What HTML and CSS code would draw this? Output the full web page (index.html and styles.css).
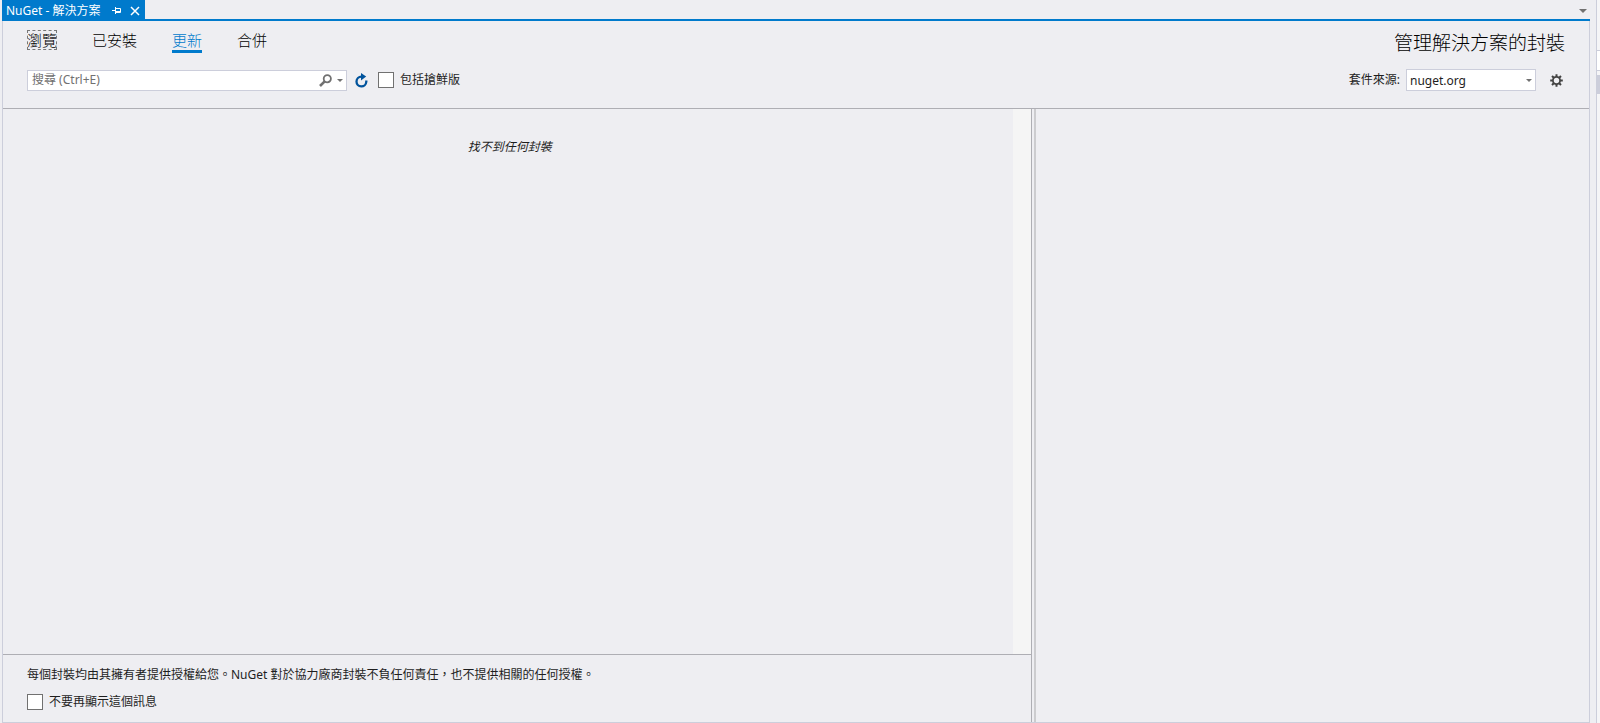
FILE: index.html
```html
<!DOCTYPE html>
<html lang="zh-Hant">
<head>
<meta charset="utf-8">
<title>NuGet - 解決方案</title>
<link rel="stylesheet" href="styles.css">
</head>
<body>
<div class="document">
  <div class="tabstrip">
    <div class="doc-tab">
      <span class="doc-name">NuGet - 解決方案</span>
      <button class="tab-button" aria-label="釘選">
        <svg width="9" height="9" viewBox="0 0 9 9"><path d="M0 4.5h3M3.5 1v7M4 2.5h4.5v4H4M4 5.5h4" fill="none" stroke="currentColor"/></svg>
      </button>
      <button class="tab-button" aria-label="關閉">
        <svg width="10" height="10" viewBox="0 0 10 10"><path d="M1 1l8 8M9 1l-8 8" fill="none" stroke="currentColor" stroke-width="1.5"/></svg>
      </button>
    </div>
    <button class="overflow-button" aria-label="文件清單">
      <svg width="8" height="4" viewBox="0 0 8 4"><path d="M0 0h8L4 4z" fill="currentColor"/></svg>
    </button>
  </div>
  <main class="manager">
    <header class="header">
      <div class="header-row">
        <nav class="filters">
          <a class="filter focused" href="#browse">瀏覽</a>
          <a class="filter" href="#installed">已安裝</a>
          <a class="filter active" href="#updates">更新</a>
          <a class="filter" href="#consolidate">合併</a>
        </nav>
        <h1 class="title">管理解決方案的封裝</h1>
      </div>
      <div class="header-row controls">
        <div class="tools">
          <div class="search">
            <input class="search-input" type="text" aria-label="搜尋" placeholder="搜尋 (Ctrl+E)">
            <button class="search-button" aria-label="搜尋">
              <svg width="13" height="13" viewBox="0 0 13 13"><circle cx="8.3" cy="4.7" r="3.6" fill="none" stroke="currentColor" stroke-width="1.8"/><path d="M5.7 7.3L1 12" stroke="currentColor" stroke-width="2.6"/></svg>
            </button>
            <button class="search-menu" aria-label="搜尋選項">
              <svg width="6" height="3" viewBox="0 0 6 3"><path d="M0 0h6L3 3z" fill="currentColor"/></svg>
            </button>
          </div>
          <button class="refresh" aria-label="重新整理">
            <svg width="13" height="15" viewBox="0 0 13 15"><path d="M7.5 3.6H6.4a4.9 4.9 0 1 0 4.9 5.2V7.5" fill="none" stroke="currentColor" stroke-width="2.3"/><path d="M6 0l5.2 3.6L6 7.5z" fill="currentColor"/></svg>
          </button>
          <label class="option"><input class="check" type="checkbox">包括搶鮮版</label>
        </div>
        <div class="source">
          <label for="source">套件來源:</label>
          <div class="combo">
            <select class="combo-select" id="source"><option>nuget.org</option></select>
            <svg class="combo-arrow" width="6" height="3" viewBox="0 0 6 3"><path d="M0 0h6L3 3z" fill="currentColor"/></svg>
          </div>
          <button class="settings" aria-label="設定">
            <svg width="13" height="13" viewBox="-6.5 -6.5 13 13"><circle r="3.6" fill="none" stroke="currentColor" stroke-width="1.8"/><path d="M0-6.3v2.5M0 6.3V3.8M-6.3 0h2.5M6.3 0H3.8M-4.5-4.5l1.8 1.8M4.5 4.5L2.7 2.7M-4.5 4.5l1.8-1.8M4.5-4.5L2.7-2.7" stroke="currentColor" stroke-width="2"/></svg>
          </button>
        </div>
      </div>
    </header>
    <div class="panes">
      <section class="list-pane">
        <div class="list">
          <p class="empty">找不到任何封裝</p>
          <div class="scrollbar"></div>
        </div>
        <footer class="notice">
          <p class="notice-text">每個封裝均由其擁有者提供授權給您。NuGet 對於協力廠商封裝不負任何責任，也不提供相關的任何授權。</p>
          <label class="option"><input class="check" type="checkbox">不要再顯示這個訊息</label>
        </footer>
      </section>
      <div class="splitter"></div>
      <section class="detail-pane"></section>
    </div>
  </main>
</div>
<aside class="side-panel">
  <div class="side-box"></div>
  <div class="side-heading"></div>
</aside>
</body>
</html>
```
FILE: styles.css
```css
* {
  box-sizing: border-box;
}

body {
  display: flex;
  height: 100vh;
  margin: 0;
  padding-left: 2px;
  background: #eeeef2;
  color: #1e1e1e;
  font: 12px/16px "Noto Sans", "Noto Sans CJK TC", sans-serif;
}

button {
  display: flex;
  align-items: center;
  justify-content: center;
  padding: 0;
  border: 0;
  background: none;
  color: inherit;
}

h1, p {
  margin: 0;
}

.document {
  display: flex;
  flex: 1;
  flex-direction: column;
  margin-right: 6px;
}

.tabstrip {
  display: flex;
  justify-content: space-between;
  height: 21px;
  border-bottom: 2px solid #007acc;
}

.doc-tab {
  display: flex;
  align-items: center;
  padding: 2px 4px 0;
  background: #007acc;
  color: #fff;
}

.doc-name {
  margin-right: 10px;
  white-space: nowrap;
}

.tab-button {
  width: 12px;
  height: 16px;
}

.tab-button + .tab-button {
  margin-left: 7px;
}

.overflow-button {
  width: 14px;
  padding-top: 3px;
  color: #717171;
}

.manager {
  display: flex;
  flex: 1;
  flex-direction: column;
  border: 1px solid #cccedb;
  border-top: 0;
}

.header {
  padding: 9px 24px 17px;
  border-bottom: 1px solid #aeaeb4;
}

.header-row {
  display: flex;
  align-items: flex-start;
  justify-content: space-between;
}

.filters {
  display: flex;
  gap: 35px;
}

.filter {
  border-bottom: 3px solid transparent;
  color: #000;
  font-size: 15px;
  font-weight: 300;
  line-height: 20px;
  text-decoration: none;
}

.filter.active {
  border-color: #007acc;
  color: #007acc;
}

.filter.focused {
  align-self: flex-start;
  border: 0;
  outline: 1px dashed #777;
  outline-offset: -1px;
}

.title {
  color: #000;
  font-size: 19px;
  font-weight: 300;
  line-height: 26px;
}

.controls {
  align-items: center;
  margin-top: 13px;
}

.tools,
.source {
  display: flex;
  align-items: center;
}

.search {
  display: flex;
  width: 320px;
  height: 21px;
  border: 1px solid #cccedb;
  background: #fff;
}

.search-input {
  flex: 1;
  min-width: 0;
  padding: 0 4px;
  border: 0;
  background: none;
  font: inherit;
}

.search-input::placeholder {
  color: #717171;
}

.search-button {
  width: 18px;
  color: #717171;
}

.search-menu {
  width: 12px;
  color: #717171;
}

.refresh {
  width: 13px;
  margin: 0 10px 0 8px;
  color: #00539c;
}

.option {
  display: flex;
  align-items: center;
  gap: 6px;
  width: max-content;
  line-height: 18px;
}

.check {
  width: 16px;
  height: 16px;
  margin: 0;
  border: 1px solid #717171;
  background: #fff;
  appearance: none;
}

.combo {
  position: relative;
  width: 130px;
  height: 22px;
  margin-left: 6px;
}

.combo-select {
  width: 100%;
  height: 100%;
  padding: 1px 3px 0;
  border: 1px solid #cccedb;
  border-radius: 0;
  background: #fff;
  color: inherit;
  font: inherit;
  appearance: none;
}

.combo-arrow {
  position: absolute;
  top: 10px;
  right: 4px;
  color: #717171;
  pointer-events: none;
}

.settings {
  width: 13px;
  margin: 0 2px 0 14px;
  color: #424242;
}

.panes {
  display: flex;
  flex: 1;
}

.list-pane {
  display: flex;
  flex: 65 1 0;
  flex-direction: column;
}

.list {
  display: flex;
  flex: 1;
}

.empty {
  flex: 1;
  padding: 30px 0 0 4px;
  font-style: italic;
  text-align: center;
}

.scrollbar {
  width: 18px;
  background: #f5f5f5;
}

.notice {
  padding: 12px 24px 11px;
  border-top: 1px solid #aeaeb4;
}

.notice-text {
  margin-bottom: 10px;
}

.splitter {
  width: 5px;
  border: solid #cccccf;
  border-width: 0 2px 0 1px;
  border-left-color: #aeaeb4;
}

.detail-pane {
  flex: 35 1 0;
}

.side-panel {
  width: 4px;
  padding-top: 50px;
  border-left: 1px solid #cccedb;
  background: #f5f5f7;
}

.side-box {
  height: 21px;
  border: solid #cccedb;
  border-width: 1px 0;
  background: #fff;
}

.side-heading {
  height: 19px;
  margin-top: 4px;
  background: #cccedb;
}
```
